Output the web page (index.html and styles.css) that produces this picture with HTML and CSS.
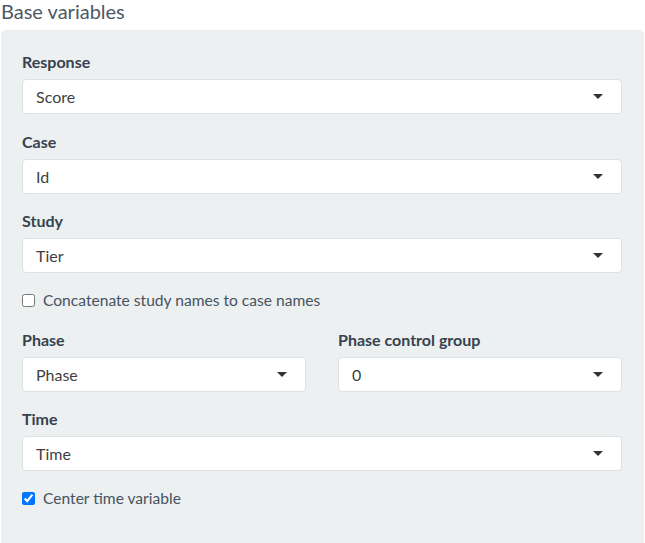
FILE: index.html
```html
<!DOCTYPE html>
<html>
<head>
<meta charset="utf-8">
<link rel="stylesheet" href="styles.css">
</head>
<body>
<h4 class="title">Base variables</h4>
<div class="well">
  <div class="group">
    <label class="lbl">Response</label>
    <div class="select"><span>Score</span><i class="caret"></i></div>
  </div>
  <div class="group">
    <label class="lbl">Case</label>
    <div class="select"><span>Id</span><i class="caret"></i></div>
  </div>
  <div class="group">
    <label class="lbl">Study</label>
    <div class="select"><span>Tier</span><i class="caret"></i></div>
  </div>
  <label class="check"><input type="checkbox"><span>Concatenate study names to case names</span></label>
  <div class="row">
    <div class="group">
      <label class="lbl">Phase</label>
      <div class="select"><span>Phase</span><i class="caret"></i></div>
    </div>
    <div class="group">
      <label class="lbl">Phase control group</label>
      <div class="select"><span>0</span><i class="caret"></i></div>
    </div>
  </div>
  <div class="group">
    <label class="lbl">Time</label>
    <div class="select"><span>Time</span><i class="caret"></i></div>
  </div>
  <label class="check check-last"><input type="checkbox" checked><span>Center time variable</span></label>
</div>
</body>
</html>
```

FILE: styles.css
```css
html, body {
  margin: 0;
  padding: 0;
  background: #ffffff;
}
body {
  font-family: Lato, "Open Sans", sans-serif;
  padding: 0 1px;
}
.title {
  margin: 0;
  height: 30px;
  font-size: 20px;
  font-weight: 400;
  line-height: 22px;
  color: #4d5965;
}
.well {
  background: #ecf0f1;
  border-radius: 5px;
  padding: 21px 22px 40px 21px;
  min-height: 500px;
  box-sizing: border-box;
}
.group {
  margin-bottom: 16.5px;
}
.lbl {
  display: block;
  font-size: 16px;
  font-weight: 700;
  line-height: 21px;
  color: #35424f;
  margin-bottom: 7px;
}
.select {
  height: 35px;
  box-sizing: border-box;
  background: #ffffff;
  border: 1px solid #dde1e3;
  border-radius: 4px;
  display: flex;
  align-items: center;
  justify-content: space-between;
  padding: 0 18px 0 13px;
  font-size: 16px;
  color: #3f3f3f;
}
.caret {
  width: 0;
  height: 0;
  border-left: 5px solid transparent;
  border-right: 5px solid transparent;
  border-top: 5px solid #333333;
}
.row {
  display: grid;
  grid-template-columns: 1fr 1fr;
  column-gap: 32px;
}
.check {
  display: flex;
  align-items: center;
  font-size: 15.6px;
  line-height: 21px;
  color: #47535f;
  margin: 2px 0 18px 0;
}
.check-last {
  margin-top: 5px;
}
.check input {
  width: 13px;
  height: 13px;
  margin: 0 8px 0 0;
}
```
